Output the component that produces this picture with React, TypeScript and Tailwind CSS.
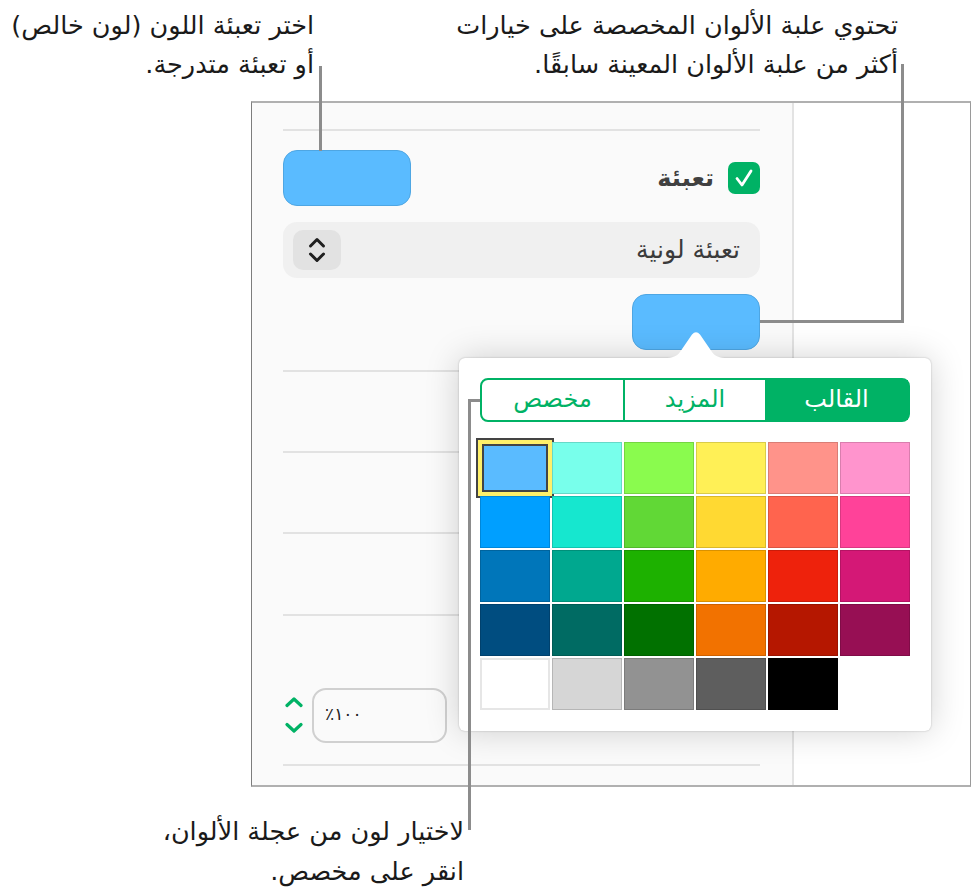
import React from "react";

const FONT = "font-['DejaVu_Sans',sans-serif]";

const rows: string[][] = [
  ["#5ABBFF", "#78FFEB", "#8AFB4E", "#FFF056", "#FF938A", "#FF94CD"],
  ["#009FFF", "#16E7CF", "#61D836", "#FFD932", "#FF644E", "#FF4299"],
  ["#0076BA", "#00A88F", "#1DB100", "#FFAB00", "#EE220C", "#D41876"],
  ["#004D80", "#006B63", "#017100", "#F27200", "#B51700", "#970F54"],
  ["#FFFFFF", "#D6D6D6", "#929292", "#5E5E5E", "#000000"],
];

function SelectChevrons() {
  return (
    <svg viewBox="0 0 18 28" className="w-[18px] h-[28px]" fill="none" stroke="#1f1f1f" strokeWidth="3" strokeLinecap="round" strokeLinejoin="round">
      <path d="M2.5 10 L9 3.5 L15.5 10" />
      <path d="M2.5 18 L9 24.5 L15.5 18" />
    </svg>
  );
}

function StepChevrons() {
  return (
    <svg viewBox="0 0 18 38" className="w-[18px] h-[38px]" fill="none" stroke="#00b265" strokeWidth="3.2" strokeLinecap="round" strokeLinejoin="round">
      <path d="M2 9.5 L9 3 L16 9.5" />
      <path d="M2 28.5 L9 35 L16 28.5" />
    </svg>
  );
}

function Well() {
  return <div className="w-[128px] h-[56px] rounded-[14px] bg-[#5abbff] border border-[#4ea6e3]" />;
}

function Rule() {
  return <div className="h-[2px] bg-[#e2e2e2]" />;
}

function Line({ className }: { className: string }) {
  return <div className={`absolute bg-[#8c8c8c] ${className}`} />;
}

export default function App() {
  return (
    <div className={`relative w-[972px] h-[894px] bg-white overflow-hidden text-[#1a1a1a] ${FONT}`}>
      {/* top callouts */}
      <div className="flex h-[101px] pt-[6px]">
        <div dir="rtl" className="w-[314px] text-[25.5px] leading-[39px] whitespace-nowrap">
          <p>اختر تعبئة اللون (لون خالص)</p>
          <p>أو تعبئة متدرجة.</p>
        </div>
        <div dir="rtl" className="ml-[584px] w-0 text-[25.5px] leading-[39px] whitespace-nowrap">
          <p>تحتوي علبة الألوان المخصصة على خيارات</p>
          <p>أكثر من علبة الألوان المعينة سابقًا.</p>
        </div>
      </div>

      {/* panel */}
      <div className="ml-[251px] w-[720px] h-[686px] flex border-t-2 border-b-2 border-l border-r border-t-[#b0b0b0] border-b-[#b0b0b0] border-l-[#7d7d7d] border-r-[#9a9a9a]">
        <div className="w-[542px] border-r-2 border-[#e3e3e3] bg-[#fafafa] pl-[31px] pr-[32px] pt-[26px] flex flex-col">
          <Rule />
          <div dir="rtl" className="mt-[19px] h-[56px] flex items-center justify-between">
            <div className="flex items-center gap-[14px]">
              <div className="w-[32px] h-[32px] rounded-[7px] bg-[#00b265] flex items-center justify-center">
                <svg viewBox="0 0 20 20" className="w-[20px] h-[20px]" fill="none" stroke="#fff" strokeWidth="2.8" strokeLinecap="round" strokeLinejoin="round">
                  <path d="M3 10.5 L8 17 L17 3" />
                </svg>
              </div>
              <span className="text-[24px] font-bold text-[#404040]">تعبئة</span>
            </div>
            <Well />
          </div>
          <div dir="rtl" className="mt-[16px] h-[56px] rounded-[14px] bg-[#f0f0f0] flex items-center justify-between pr-[20px] pl-[10px]">
            <span className="text-[25px] text-[#3b3b3b]">تعبئة لونية</span>
            <div className="w-[48px] h-[40px] rounded-[10px] bg-[#e2e2e2] flex items-center justify-center">
              <SelectChevrons />
            </div>
          </div>
          <div className="mt-[16px] flex justify-end">
            <Well />
          </div>
          <div className="mt-[20px]"><Rule /></div>
          <div className="mt-[79px]"><Rule /></div>
          <div className="mt-[79px]"><Rule /></div>
          <div className="mt-[80px]"><Rule /></div>
          <div className="mt-[71px] flex items-center gap-[9px] ml-[2px] h-[56px]">
            <StepChevrons />
            <div dir="rtl" className="w-[135px] h-[55px] rounded-[14px] border-2 border-[#d0d0d0] flex items-center justify-end pl-[11px] text-[17px] text-[#222]">
              ١٠٠٪
            </div>
          </div>
          <div className="mt-[21px]"><Rule /></div>
        </div>
        <div className="flex-1 bg-white" />
      </div>

      {/* popover */}
      <div className="absolute left-[459px] top-[358px] w-[472px] h-[373px] rounded-[6px] bg-white shadow-[0_0_34px_rgba(0,0,0,0.18),0_0_2px_rgba(0,0,0,0.25)] pt-[20px] px-[21px]">
        <svg viewBox="0 0 64 28" className="absolute left-[205px] top-[-27px] w-[64px] h-[28px]" fill="#fff">
          <path d="M0 27 C9 27 13 25 16 21 L28 3.5 Q32 -1 36 3.5 L48 21 C51 25 55 27 64 27 L64 28 L0 28 Z" />
        </svg>
        <div dir="rtl" className="h-[44px] w-[430px] rounded-[8px] border-2 border-[#00b265] flex text-[24px] text-[#00b265]">
          <div className="w-[143px] bg-[#00b265] text-white flex items-center justify-center pb-[2px]">القالب</div>
          <div className="w-[142px] border-l-2 border-[#00b265] flex items-center justify-center pb-[2px]">المزيد</div>
          <div className="flex-1 flex items-center justify-center pb-[2px]">مخصص</div>
        </div>
        <div className="mt-[20px] flex flex-col gap-[2px]">
          {rows.map((row, r) => (
            <div key={r} className="flex gap-[2px]">
              {row.map((c, i) => (
                <div
                  key={i}
                  className={`relative w-[70px] h-[52px] border ${c === "#FFFFFF" ? "border-2 border-[#e6e6e6]" : "border-black/15"}`}
                  style={{ backgroundColor: c }}
                >
                  {r === 0 && i === 0 && (
                    <div className="absolute left-[-5px] top-[-5px] w-[78px] h-[60px] border-2 border-[#444] bg-[#fff06a] p-[4px]">
                      <div className="w-full h-full border-2 border-[#444] bg-[#5abbff]" />
                    </div>
                  )}
                </div>
              ))}
            </div>
          ))}
        </div>
      </div>

      {/* bottom callout */}
      <div dir="rtl" className="absolute left-[0px] top-[811px] w-[464px] text-[25.5px] leading-[40px] whitespace-nowrap">
        <p>لاختيار لون من عجلة الألوان،</p>
        <p>انقر على مخصص.</p>
      </div>

      {/* leader lines */}
      <Line className="left-[319px] top-[66px] w-[3px] h-[85px]" />
      <Line className="left-[901px] top-[64px] w-[3px] h-[259px]" />
      <Line className="left-[760px] top-[320px] w-[144px] h-[3px]" />
      <Line className="left-[468px] top-[399px] w-[3px] h-[431px]" />
      <Line className="left-[468px] top-[399px] w-[12px] h-[3px]" />
    </div>
  );
}
